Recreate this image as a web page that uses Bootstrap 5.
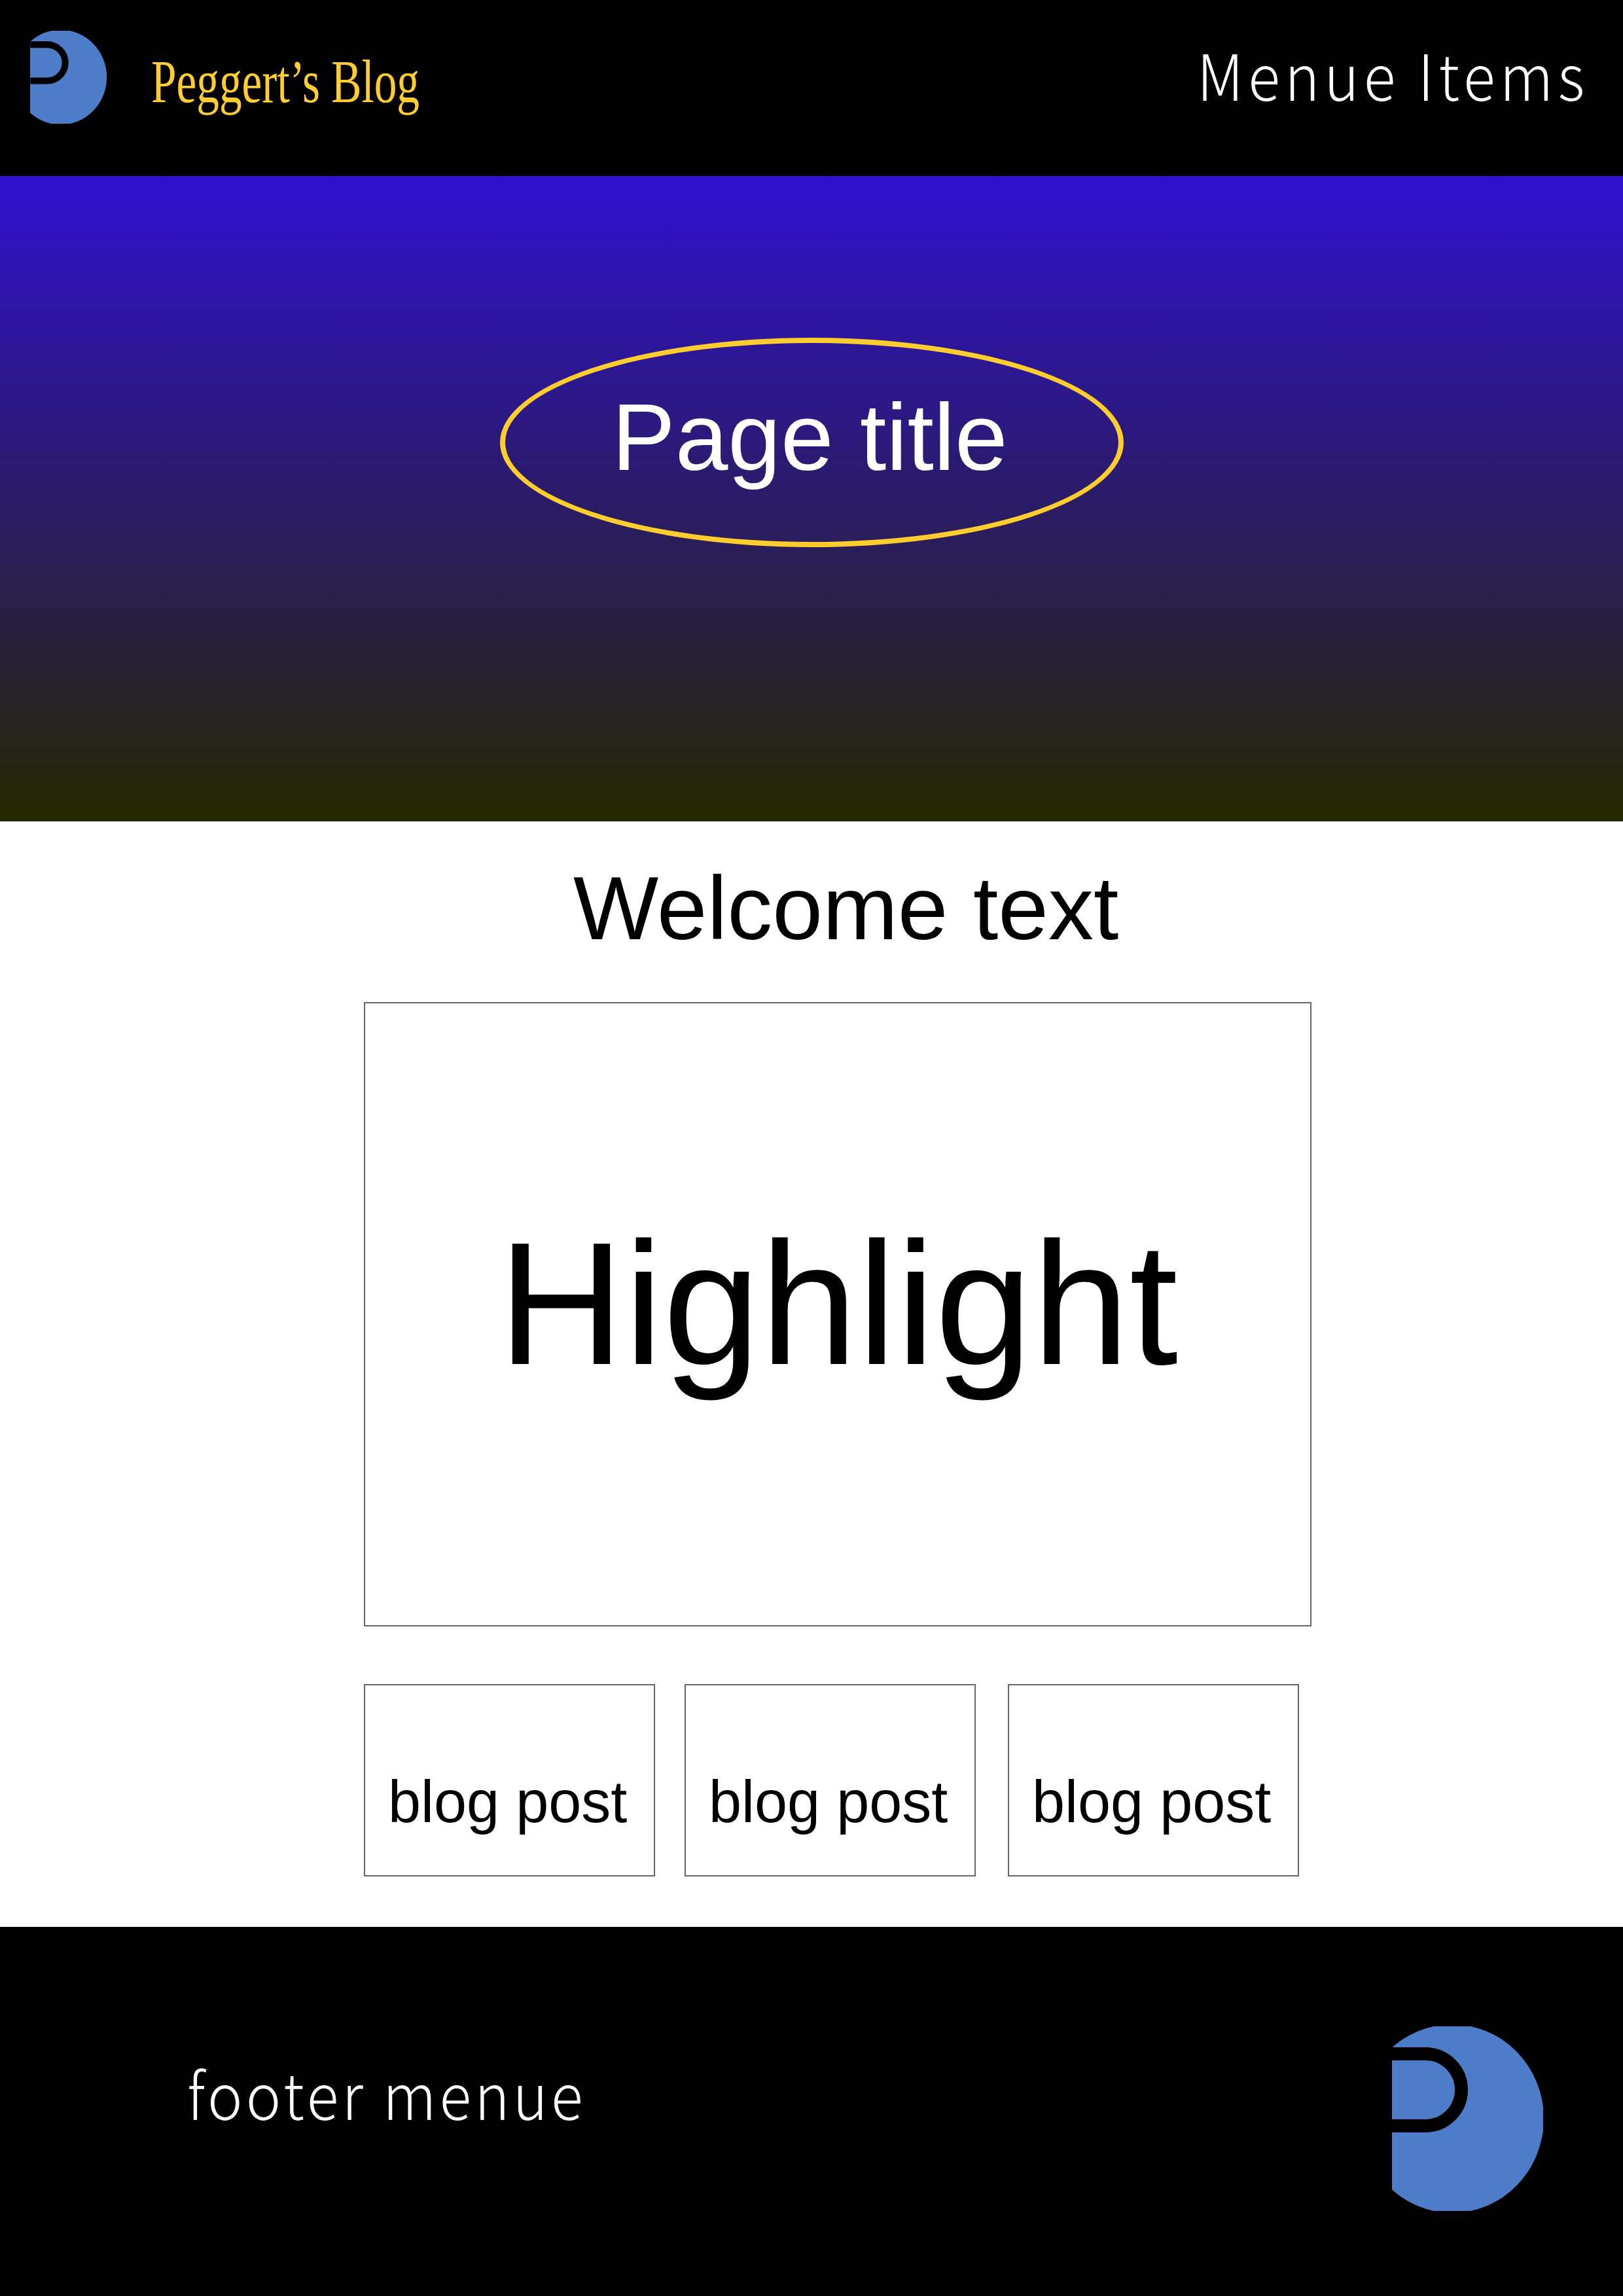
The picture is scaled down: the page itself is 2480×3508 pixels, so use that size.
<!DOCTYPE html>
<html lang="en">
<head>
  <meta charset="UTF-8">
  <title>Peggert's Blog</title>
  <link href="https://cdn.jsdelivr.net/npm/bootstrap@5.3.0/dist/css/bootstrap.min.css" rel="stylesheet">
  <style>
    body { background: #fff; font-family: "Liberation Sans", Arial, sans-serif; color: #000; }
    .top-bar { height: 269px; background: #000; }
    .logo-small { width: 117px; height: 142px; margin-left: 46px; margin-top: 47px; }
    .brand-name { font-family: "Liberation Serif", serif; font-size: 93px; line-height: 1; color: #ffcd2e; transform: scaleX(.745); transform-origin: left center; margin-left: 68px; margin-top: 78px; white-space: nowrap; }
    .menu-text { font-family: "Noto Sans CJK JP", "Noto Sans", sans-serif; font-weight: 300; font-size: 97px; line-height: 1; color: #fff; margin-right: 52px; margin-top: 63px; letter-spacing: 7.7px; transform: scaleX(.93); transform-origin: right center; white-space: nowrap; }
    .hero-band { height: 986px; background: linear-gradient(180deg, #3010d0 0%, #242800 100%); padding-top: 247px; padding-left: 764px; }
    .title-oval { width: 953px; height: 320px; border: 8px solid #ffcd2e; border-radius: 50%; color: #fff; font-size: 145px; line-height: 1; padding-top: 72px; padding-left: 163px; white-space: nowrap; }
    .content-wrap { height: 1689px; padding-left: 556px; }
    .welcome-line { font-size: 138px; line-height: 1; margin: 0 0 0 320px; padding-top: 63px; white-space: nowrap; }
    .highlight-box { width: 1448px; height: 954px; margin-top: 75px; border: 2px solid #666; font-size: 267px; line-height: 1; padding-top: 325px; padding-left: 203px; white-space: nowrap; }
    .post-row { margin-top: 88px; }
    .post-box { width: 445px; height: 294px; border: 2px solid #666; font-size: 90px; line-height: 1; padding-top: 133px; padding-left: 35px; white-space: nowrap; }
    .post-second { margin-left: 45px; }
    .post-third { margin-left: 49px; }
    .foot-bar { height: 564px; background: #000; }
    .foot-text { font-family: "Noto Sans CJK JP", "Noto Sans", sans-serif; font-weight: 300; font-size: 97px; line-height: 1; color: #fff; margin-left: 286px; margin-top: 204px; letter-spacing: 5.5px; transform: scaleX(.93); transform-origin: left center; white-space: nowrap; }
    .logo-big { width: 231px; height: 282px; margin-right: 122px; margin-top: 152px; }
  </style>
</head>
<body class="m-0">
  <svg width="0" height="0" class="d-block">
    <defs>
      <symbol id="peg-logo" viewBox="0 0 231 282">
        <ellipse cx="92" cy="141" rx="140" ry="144" fill="#4d7cc8"/>
        <path d="M0 42H51A55 55 0 0 1 51 152H0" fill="none" stroke="#000" stroke-width="20"/>
      </symbol>
    </defs>
  </svg>
  <header class="top-bar d-flex justify-content-between align-items-start">
    <div class="d-flex align-items-start">
      <svg class="logo-small"><use href="#peg-logo"/></svg>
      <div class="brand-name">Peggert’s Blog</div>
    </div>
    <div class="menu-text">Menue Items</div>
  </header>
  <section class="hero-band">
    <div class="title-oval">Page title</div>
  </section>
  <main class="content-wrap">
    <h1 class="welcome-line fw-normal">Welcome text</h1>
    <div class="highlight-box">Highlight</div>
    <div class="post-row d-flex">
      <div class="post-box">blog post</div>
      <div class="post-box post-second">blog post</div>
      <div class="post-box post-third">blog post</div>
    </div>
  </main>
  <footer class="foot-bar d-flex justify-content-between align-items-start">
    <div class="foot-text">footer menue</div>
    <svg class="logo-big"><use href="#peg-logo"/></svg>
  </footer>
  <script src="https://cdn.jsdelivr.net/npm/bootstrap@5.3.0/dist/js/bootstrap.bundle.min.js"></script>
</body>
</html>
